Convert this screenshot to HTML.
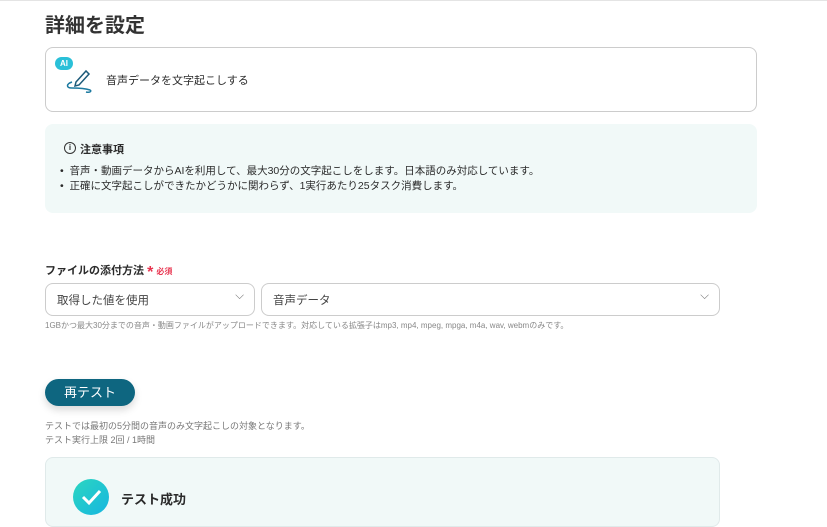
<!DOCTYPE html>
<html><head><meta charset="utf-8"><style>
*{box-sizing:border-box;margin:0;padding:0}
body{width:827px;height:518px;overflow:hidden;background:#fff;font-family:"Liberation Sans","Noto Sans CJK JP",sans-serif;color:#2b2b2b;position:relative}
.a{position:absolute}
</style></head><body>
<div class="a" style="left:0;top:0;width:827px;height:1px;background:#e4e4e4"></div>
<div class="a" style="left:45px;top:9px;font-size:20px;font-weight:bold;color:#333">詳細を設定</div>
<div class="a" style="left:45px;top:47px;width:712px;height:65px;border:1px solid #ccc;border-radius:8px"></div>
<div class="a" style="left:55px;top:57px;width:18px;height:13px;border-radius:7px;background:#2ac0d8;color:#fff;font-size:8px;font-weight:bold;text-align:center;line-height:13px">AI</div>
<svg class="a" style="left:64px;top:66px" width="30" height="28" viewBox="0 0 30 28"><path d="M12 16 L22 5 L25 8 L15 19 L11 20 Z" fill="none" stroke="#1d5b7a" stroke-width="1.5"/><path d="M8 16 C2 18 2 22 8 22 C14 22 20 22 26 24 C28 25 26 27 22 26" fill="none" stroke="#1d7aa0" stroke-width="1.5"/></svg>
<div class="a" style="left:106px;top:72px;font-size:11px">音声データを文字起こしする</div>
<div class="a" style="left:45px;top:124px;width:712px;height:89px;background:#f1f9f8;border-radius:8px"></div>
<div class="a" style="left:64px;top:142px;width:12px;height:12px;border:1.3px solid #333;border-radius:50%;font-size:8px;text-align:center;line-height:10px;font-weight:bold">i</div>
<div class="a" style="left:80px;top:141px;font-size:11px;font-weight:bold">注意事項</div>
<div class="a" style="left:60px;top:164px;font-size:10.5px;line-height:15px">•&nbsp;&nbsp;音声・動画データからAIを利用して、最大30分の文字起こしをします。日本語のみ対応しています。<br>•&nbsp;&nbsp;正確に文字起こしができたかどうかに関わらず、1実行あたり25タスク消費します。</div>
<div class="a" style="left:45px;top:262px;font-size:11px;font-weight:bold">ファイルの添付方法 <span style="color:#e8344f;font-size:16px;vertical-align:-3px">*</span> <span style="color:#e8344f;font-size:8px">必須</span></div>
<div class="a" style="left:45px;top:283px;width:210px;height:33px;border:1px solid #ccc;border-radius:8px;font-size:11.5px;padding:8px 11px;color:#444">取得した値を使用<span style="position:absolute;right:10px;top:6px;color:#777">⌵</span></div>
<div class="a" style="left:261px;top:283px;width:459px;height:33px;border:1px solid #ccc;border-radius:8px;font-size:11.5px;padding:8px 11px;color:#444">音声データ<span style="position:absolute;right:10px;top:6px;color:#777">⌵</span></div>
<div class="a" style="left:45px;top:320px;font-size:8px;color:#888">1GBかつ最大30分までの音声・動画ファイルがアップロードできます。対応している拡張子はmp3, mp4, mpeg, mpga, m4a, wav, webmのみです。</div>
<div class="a" style="left:45px;top:379px;width:90px;height:27px;border-radius:14px;background:#0e6680;color:#fff;font-size:13px;text-align:center;line-height:27px;box-shadow:0 4px 8px rgba(0,0,0,.15)">再テスト</div>
<div class="a" style="left:45px;top:419px;font-size:9px;color:#777;line-height:14px">テストでは最初の5分間の音声のみ文字起こしの対象となります。<br>テスト実行上限 2回 / 1時間</div>
<div class="a" style="left:45px;top:457px;width:675px;height:70px;background:#f1f9f8;border:1px solid #e0eaea;border-radius:8px"></div>
<div class="a" style="left:73px;top:479px;width:36px;height:36px;border-radius:50%;background:linear-gradient(135deg,#2cd6c0,#16b6e0)"></div>
<svg class="a" style="left:73px;top:479px" width="36" height="36"><path d="M10 18 L16 24 L27 12" fill="none" stroke="#fff" stroke-width="3"/></svg>
<div class="a" style="left:121px;top:489px;font-size:13px;font-weight:bold">テスト成功</div>
</body></html>
